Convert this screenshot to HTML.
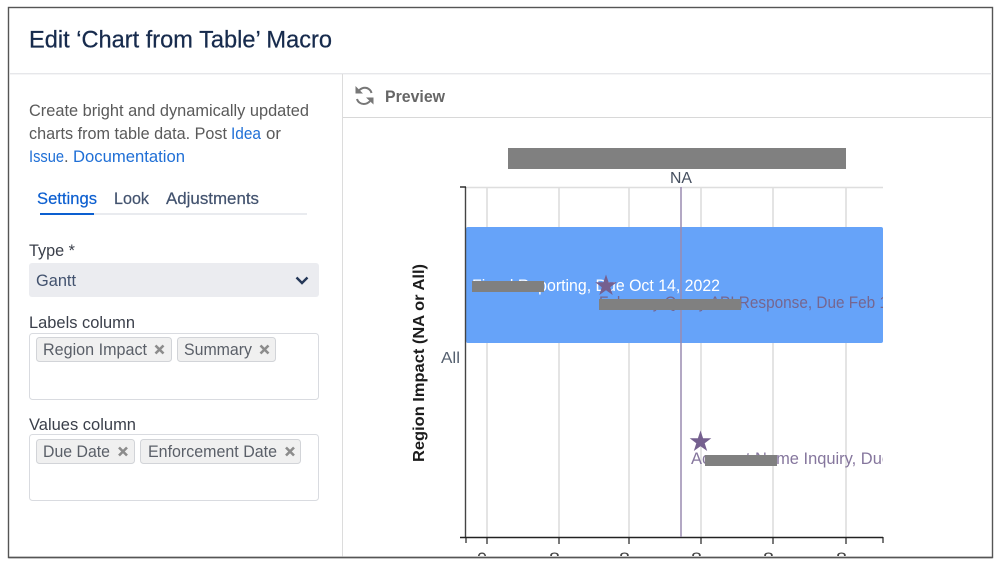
<!DOCTYPE html>
<html><head><meta charset="utf-8"><style>
html,body{margin:0;padding:0;background:#fff;width:999px;height:562px;overflow:hidden}
svg{display:block}
text{font-family:"Liberation Sans",sans-serif}
</style></head><body>
<svg width="999" height="562" viewBox="0 0 999 562" xmlns="http://www.w3.org/2000/svg">
<defs>
<clipPath id="c"><rect x="460" y="180" width="423" height="376"/></clipPath>
<clipPath id="b"><rect x="460" y="537" width="430" height="19"/></clipPath>
</defs>
<rect width="999" height="562" fill="#fff"/>
<rect x="8.500" y="7.500" width="984" height="550" fill="#fff" stroke="#555" stroke-width="1.400"/>
<text x="29" y="47.500" font-size="24.500" fill="#172b4d" stroke="#172b4d" stroke-width="0.250" textLength="303" lengthAdjust="spacingAndGlyphs">Edit ‘Chart from Table’ Macro</text>
<rect x="10" y="73" width="982" height="1.400" fill="#e6e7ea"/>
<rect x="342" y="74" width="1" height="483" fill="#dcdcdc"/>
<rect x="343" y="117" width="649" height="1" fill="#d8d8d8"/>

<text x="29" y="116" font-size="16.500" fill="#5a5a5a" textLength="280" lengthAdjust="spacingAndGlyphs">Create bright and dynamically updated</text>
<text x="29" y="139" font-size="16.500" fill="#5a5a5a" textLength="198" lengthAdjust="spacingAndGlyphs">charts from table data. Post</text>
<text x="231" y="139" font-size="16.500" fill="#1f6fd6" textLength="30" lengthAdjust="spacingAndGlyphs">Idea</text>
<text x="266" y="139" font-size="16.500" fill="#5a5a5a" textLength="15" lengthAdjust="spacingAndGlyphs">or</text>
<text x="29" y="162" font-size="16.500" fill="#1f6fd6" textLength="35" lengthAdjust="spacingAndGlyphs">Issue</text>
<text x="64" y="162" font-size="16.500" fill="#5a5a5a">.</text>
<text x="73" y="162" font-size="16.500" fill="#1f6fd6" textLength="112" lengthAdjust="spacingAndGlyphs">Documentation</text>

<text x="37" y="204" font-size="16.500" fill="#0c5fd0" stroke="#0c5fd0" stroke-width="0.200" textLength="60" lengthAdjust="spacingAndGlyphs">Settings</text>
<text x="114" y="204" font-size="16.500" fill="#42526e" stroke="#42526e" stroke-width="0.200" textLength="35" lengthAdjust="spacingAndGlyphs">Look</text>
<text x="166" y="204" font-size="16.500" fill="#42526e" stroke="#42526e" stroke-width="0.200" textLength="93" lengthAdjust="spacingAndGlyphs">Adjustments</text>
<rect x="40" y="213" width="267" height="2" fill="#e9ebef"/>
<rect x="40" y="213" width="54" height="2" fill="#0c5fd0"/>

<text x="29" y="256" font-size="16.500" fill="#3a3f4a" textLength="46" lengthAdjust="spacingAndGlyphs">Type *</text>
<rect x="29" y="263" width="290" height="34" rx="3" fill="#ebecf0"/>
<text x="36" y="286" font-size="16.500" fill="#42526e" textLength="40" lengthAdjust="spacingAndGlyphs">Gantt</text>
<path d="M296.500 277.500L302 283L307.500 277.500" fill="none" stroke="#253858" stroke-width="2.400"/>

<text x="29" y="328" font-size="16.500" fill="#3a3f4a" textLength="106" lengthAdjust="spacingAndGlyphs">Labels column</text>
<rect x="29.500" y="333.500" width="289" height="66" rx="3" fill="#fff" stroke="#d9dbe0"/>
<rect x="36.500" y="337.500" width="135" height="24" rx="3" fill="#f0f0f0" stroke="#d2d4d8"/>
<text x="43" y="355" font-size="16.500" fill="#5a5f68" textLength="104" lengthAdjust="spacingAndGlyphs">Region Impact</text>
<path d="M155.500 345.500L163.500 353.500M163.500 345.500L155.500 353.500" stroke="#8c8c8c" stroke-width="2.600"/>
<rect x="177.500" y="337.500" width="98" height="24" rx="3" fill="#f0f0f0" stroke="#d2d4d8"/>
<text x="184" y="355" font-size="16.500" fill="#5a5f68" textLength="68" lengthAdjust="spacingAndGlyphs">Summary</text>
<path d="M260.500 345.500L268.500 353.500M268.500 345.500L260.500 353.500" stroke="#8c8c8c" stroke-width="2.600"/>

<text x="29" y="430" font-size="16.500" fill="#3a3f4a" textLength="107" lengthAdjust="spacingAndGlyphs">Values column</text>
<rect x="29.500" y="434.500" width="289" height="66" rx="3" fill="#fff" stroke="#d9dbe0"/>
<rect x="36.500" y="439.500" width="98" height="24" rx="3" fill="#f0f0f0" stroke="#d2d4d8"/>
<text x="43" y="457" font-size="16.500" fill="#5a5f68" textLength="67" lengthAdjust="spacingAndGlyphs">Due Date</text>
<path d="M119 447.500L127 455.500M127 447.500L119 455.500" stroke="#8c8c8c" stroke-width="2.600"/>
<rect x="140.500" y="439.500" width="160" height="24" rx="3" fill="#f0f0f0" stroke="#d2d4d8"/>
<text x="148" y="457" font-size="16.500" fill="#5a5f68" textLength="129" lengthAdjust="spacingAndGlyphs">Enforcement Date</text>
<path d="M286 447.500L294 455.500M294 447.500L286 455.500" stroke="#8c8c8c" stroke-width="2.600"/>

<g fill="none" stroke="#777" stroke-width="2">
<path d="M359 90.500C361 88.500 363 87.800 365 87.800C368 87.800 370.800 90 371.500 93"/>
<path d="M357 99C357.800 102 360.600 104 363.800 104C366 104 368 103.200 370 101.200"/>
</g>
<path d="M355.500 86L355.500 93.500L363 93.500ZM373.500 104.500L373.500 97.500L366 97.500Z" fill="#777"/>
<text x="385" y="102" font-size="16.500" font-weight="bold" fill="#666" textLength="60" lengthAdjust="spacingAndGlyphs">Preview</text>

<rect x="508" y="148" width="338" height="21" fill="#808080"/>
<text x="670" y="183" font-size="16" fill="#454f5f" textLength="22" lengthAdjust="spacingAndGlyphs">NA</text>

<g stroke="#dedede" stroke-width="1.600">
<path d="M487 187V537M559 187V537M629 187V537M701 187V537M773 187V537M846 187V537"/>
<path d="M466 187.500H883"/>
</g>
<rect x="466" y="227" width="417" height="116" rx="2" fill="#66a3f9"/>
<path d="M465.500 187V537" stroke="#444" stroke-width="1.400"/>
<path d="M460 187H466" stroke="#222" stroke-width="1.400"/>
<path d="M460 537.500H883" stroke="#222" stroke-width="1.500"/>
<path d="M466 537V543M487 537V544M559 537V544M629 537V544M701 537V544M773 537V544M846 537V544M883 537V543" stroke="#222" stroke-width="1.200"/>
<path d="M681 187V537" stroke="#9a8bb0" stroke-width="1.500"/>

<g clip-path="url(#c)">
<text x="472" y="291" font-size="16.500" fill="#fff" textLength="248" lengthAdjust="spacingAndGlyphs">Fiscal Reporting, Due Oct 14, 2022</text>
<text x="599" y="308" font-size="16.500" fill="#76668f" textLength="289" lengthAdjust="spacingAndGlyphs">February Query API Response, Due Feb 1</text>
<text x="691" y="464" font-size="16.500" fill="#85769d" textLength="200" lengthAdjust="spacingAndGlyphs">Account Name Inquiry, Due</text>
</g>
<path d="M606 274.500L608.600 282.300L616.800 282.300L610.200 287.200L612.700 295L606 290.200L599.300 295L601.800 287.200L595.200 282.300L603.400 282.300Z" fill="#75608f"/>
<path d="M700.500 430.500L703.100 438.300L711.300 438.300L704.700 443.200L707.200 451L700.500 446.200L693.800 451L696.300 443.200L689.700 438.300L697.900 438.300Z" fill="#75608f"/>

<rect x="472" y="281" width="72" height="11" fill="#808080"/>
<rect x="599" y="299" width="142" height="11" fill="#808080"/>
<rect x="705" y="455" width="72" height="11" fill="#808080"/>

<text x="441" y="363" font-size="16" fill="#55606f" textLength="19" lengthAdjust="spacingAndGlyphs">All</text>
<text transform="translate(424 462) rotate(-90)" font-size="15.500" font-weight="bold" fill="#1c1c1c" textLength="198" lengthAdjust="spacingAndGlyphs">Region Impact (NA or All)</text>

<g clip-path="url(#b)" font-size="17" fill="#444">
<text x="477" y="564" textLength="10" lengthAdjust="spacingAndGlyphs">0</text>
<text x="549" y="564" textLength="11" lengthAdjust="spacingAndGlyphs">8</text>
<text x="619" y="564" textLength="11" lengthAdjust="spacingAndGlyphs">8</text>
<text x="691" y="564" textLength="11" lengthAdjust="spacingAndGlyphs">8</text>
<text x="763" y="564" textLength="11" lengthAdjust="spacingAndGlyphs">8</text>
<text x="836" y="564" textLength="11" lengthAdjust="spacingAndGlyphs">8</text>
</g>
<path d="M8.500 557.500H992.500" stroke="#555" stroke-width="1.400"/>
</svg>
</body></html>
